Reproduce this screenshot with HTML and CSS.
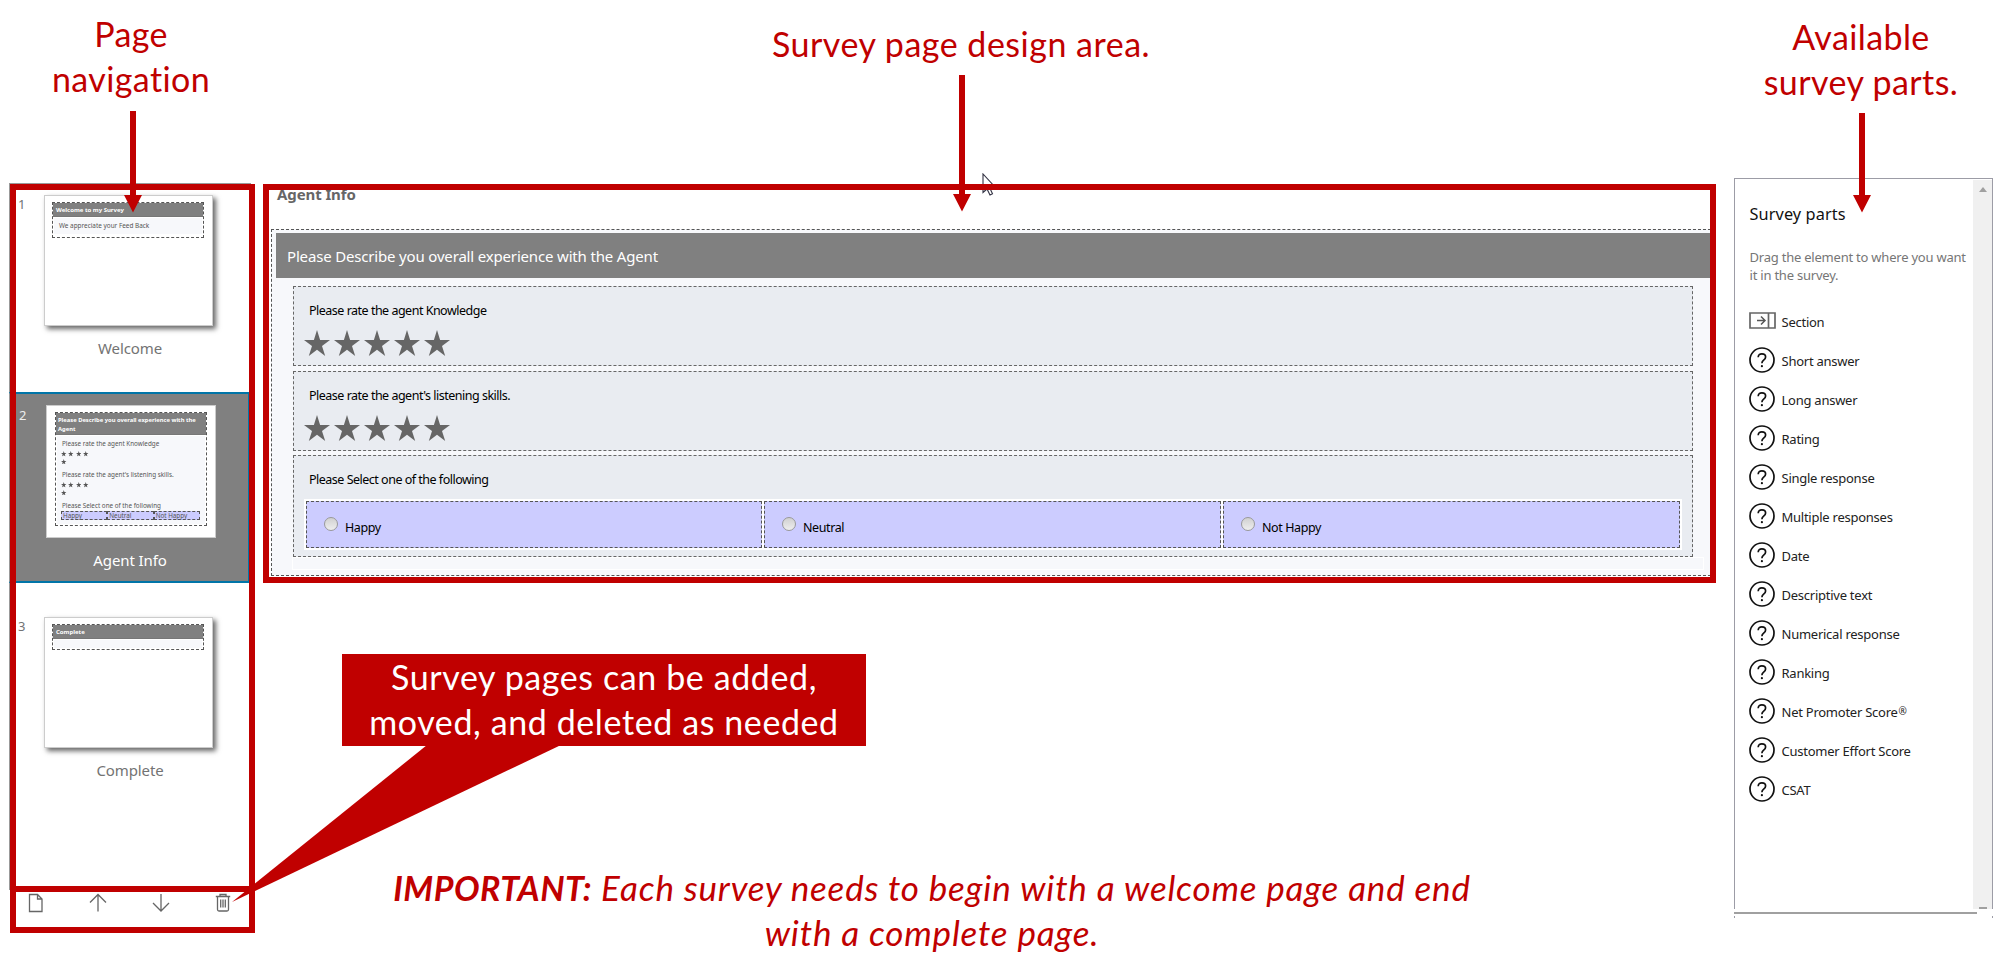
FILE: index.html
```html
<!DOCTYPE html>
<html lang="en">
<head>
<meta charset="utf-8">
<title>Survey designer overview</title>
<link rel="stylesheet" href="styles.css">
</head>
<body>
<svg class="defs" width="0" height="0">
  <symbol id="star" viewBox="0 0 26 26"><path d="M13 0l3.100 10H26l-8 5.900L21.200 26 13 19.700 4.800 26 8 15.900 0 10h9.900z" fill="currentColor"/></symbol>
  <symbol id="ask" viewBox="0 0 26 26"><circle cx="13" cy="13" r="12" fill="none" stroke="#111" stroke-width="1.700"/><path d="M9.200 10.200C9.200 7.900 10.800 6.800 12.900 6.800c2.200 0 3.700 1.200 3.700 3.100 0 1.600-.9 2.300-2 3.200-1.100.9-1.700 1.500-1.700 3.100" fill="none" stroke="#111" stroke-width="1.700"/><circle cx="12.900" cy="19.200" r="1.100" fill="#111"/></symbol>
</svg>

<main class="app">
  <aside class="sidebar">
    <section class="page page-welcome">
      <span class="num">1</span>
      <div class="card">
        <div class="mini">
          <div class="mini-head">Welcome to my Survey</div>
          <div class="mini-body mini-text">We appreciate your Feed Back</div>
        </div>
      </div>
      <div class="label">Welcome</div>
    </section>
    <section class="page page-agent">
      <span class="num">2</span>
      <div class="card">
        <div class="mini">
          <div class="mini-head">Please Describe you overall experience with the Agent</div>
          <div class="mini-body">
            <div class="mini-q">Please rate the agent Knowledge</div>
            <div class="mini-stars"><svg><use href="#star"/></svg><svg><use href="#star"/></svg><svg><use href="#star"/></svg><svg><use href="#star"/></svg><svg><use href="#star"/></svg></div>
            <div class="mini-q">Please rate the agent's listening skills.</div>
            <div class="mini-stars"><svg><use href="#star"/></svg><svg><use href="#star"/></svg><svg><use href="#star"/></svg><svg><use href="#star"/></svg><svg><use href="#star"/></svg></div>
            <div class="mini-q">Please Select one of the following</div>
            <div class="mini-opts"><span>Happy</span><span>Neutral</span><span>Not Happy</span></div>
          </div>
        </div>
      </div>
      <div class="label">Agent Info</div>
    </section>
    <section class="page page-complete">
      <span class="num">3</span>
      <div class="card">
        <div class="mini">
          <div class="mini-head">Complete</div>
          <div class="mini-body"></div>
        </div>
      </div>
      <div class="label">Complete</div>
    </section>
    <nav class="tools">
      <svg width="16" height="20" viewBox="0 0 16 20"><path d="M1.500 1.500h8l4.500 4.500v12.500H1.500zM9.500 1.500V6H14"/></svg>
      <svg width="18" height="20" viewBox="0 0 18 20"><path d="M9 18.500V1.500M1 9.500l8-8 8 8"/></svg>
      <svg width="18" height="20" viewBox="0 0 18 20"><path d="M9 1v17M1 10l8 8 8-8"/></svg>
      <svg width="16" height="20" viewBox="0 0 16 20"><path d="M.8 3.500h14.400M5 3.500v-2h6v2M2.500 3.500v13q0 1.500 1.500 1.500h8q1.500 0 1.500-1.500v-13M5.700 6.500v8M8 6.500v8M10.300 6.500v8"/></svg>
    </nav>
  </aside>

  <div class="design">
    <h1 class="design-title">Agent Info</h1>
    <svg class="cursor" width="14" height="24" viewBox="0 0 14 24"><path d="M1 1v18.500l4-3.500 3 6 2.500-1.200L7.800 15 12.500 13.500z" fill="#fff" stroke="#333344" stroke-width="1.100"/></svg>
    <section class="section">
      <h2 class="section-head">Please Describe you overall experience with the Agent</h2>
      <div class="questions">
        <div class="question">
          <p>Please rate the agent Knowledge</p>
          <div class="stars"><svg><use href="#star"/></svg><svg><use href="#star"/></svg><svg><use href="#star"/></svg><svg><use href="#star"/></svg><svg><use href="#star"/></svg></div>
        </div>
        <div class="question">
          <p>Please rate the agent's listening skills.</p>
          <div class="stars"><svg><use href="#star"/></svg><svg><use href="#star"/></svg><svg><use href="#star"/></svg><svg><use href="#star"/></svg><svg><use href="#star"/></svg></div>
        </div>
        <div class="question question-choice">
          <p>Please Select one of the following</p>
          <div class="options">
            <div class="option"><i class="radio"></i><span>Happy</span></div>
            <div class="option"><i class="radio"></i><span>Neutral</span></div>
            <div class="option"><i class="radio"></i><span>Not Happy</span></div>
          </div>
        </div>
      </div>
      <div class="drop"></div>
    </section>
  </div>

  <aside class="parts">
    <div class="parts-main">
      <h2>Survey parts</h2>
      <p>Drag the element to where you want<br>it in the survey.</p>
      <ul>
        <li><svg class="sec" viewBox="0 0 27 17"><path d="M1 1h25v15H1zM19.500 1v15" fill="none" stroke="#666" stroke-width="1.700"/><path d="M8 8.500h8M12 4.500l4 4-4 4" fill="none" stroke="#555" stroke-width="1.500"/></svg><span>Section</span></li>
        <li><svg><use href="#ask"/></svg><span>Short answer</span></li>
        <li><svg><use href="#ask"/></svg><span>Long answer</span></li>
        <li><svg><use href="#ask"/></svg><span>Rating</span></li>
        <li><svg><use href="#ask"/></svg><span>Single response</span></li>
        <li><svg><use href="#ask"/></svg><span>Multiple responses</span></li>
        <li><svg><use href="#ask"/></svg><span>Date</span></li>
        <li><svg><use href="#ask"/></svg><span>Descriptive text</span></li>
        <li><svg><use href="#ask"/></svg><span>Numerical response</span></li>
        <li><svg><use href="#ask"/></svg><span>Ranking</span></li>
        <li><svg><use href="#ask"/></svg><span>Net Promoter Score<b class="reg">®</b></span></li>
        <li><svg><use href="#ask"/></svg><span>Customer Effort Score</span></li>
        <li><svg><use href="#ask"/></svg><span>CSAT</span></li>
      </ul>
    </div>
    <div class="scrollbar"><i class="up"></i><i class="down"></i></div>
    <div class="parts-edge"></div>
  </aside>
</main>

<!-- Annotations laid over the designer -->
<div class="frame frame-pages"></div>
<div class="frame frame-tools"></div>
<div class="frame frame-design"></div>
<svg class="shapes" width="2000" height="979" viewBox="0 0 2000 979" fill="#c00000">
  <path d="M130 111h6v84h6l-9 17.500-9-17.500h6z"/>
  <path d="M959 75h6v119h6l-9 17.500-9-17.500h6z"/>
  <path d="M1859 113h6v82h6l-9 17.500-9-17.500h6z"/>
  <path d="M427 745h134L232 902z"/>
</svg>
<div class="note note-nav">Page<br>navigation</div>
<div class="note note-design">Survey page design area.</div>
<div class="note note-parts">Available<br>survey parts.</div>
<div class="note note-callout">Survey pages can be added,<br>moved, and deleted as needed</div>
<div class="note note-important"><b>IMPORTANT:</b> Each survey needs to begin with a welcome page and end<br>with a complete page.</div>
</body>
</html>
```
FILE: styles.css
```css
* { box-sizing: border-box; }
body { margin: 0; width: 2000px; height: 979px; position: relative; overflow: hidden; background: #fff; font-family: "Noto Sans", "Open Sans", sans-serif; }
h1, h2, p, ul { margin: 0; padding: 0; font-weight: 400; }
svg { display: block; flex: none; }
.defs { position: absolute; }
.app { display: flex; align-items: flex-start; padding-top: 178px; }

/* page navigation */
.sidebar { margin: 5px 0 0 9px; width: 242px; }
.page { display: grid; grid-template-columns: 34px 169px; align-content: start; border-left: 1px solid #999; color: #737373; }
.page-welcome { border-top: 1px solid #999; height: 209px; padding-top: 11px; }
.page-agent { height: 191px; padding: 11px 0 0 2px; background: #808080; border-top: 2px solid #0075a8; border-bottom: 2px solid #0075a8; border-right: 2px solid #0075a8; margin-right: 1px; color: #fff; }
.page-complete { height: 307px; padding-top: 34px; }
.num { font-size: 13px; line-height: 20px; padding-left: 8px; margin-top: -1px; }
.label { grid-column: 2; text-align: center; font-size: 15px; letter-spacing: -.1px; line-height: 24px; margin-top: 9.500px; padding-left: 3px; }
.page-agent .label { padding: 0; margin-left: -1px; }
.card { height: 131px; border: 1px solid #ccc; background: #fff; padding: 6px 8px 0 7px; box-shadow: 3px 3px 5px rgba(0,0,0,.6); }
.page-agent .card { width: 170px; height: 133px; box-shadow: none; padding-left: 8px; }
.page-agent .num { color: #eee; margin-top: 0; padding-left: 7px; }
.mini { border: 1px dashed #555; color: #555; font-size: 6.300px; height: 36px; }
.mini-head { background: #808080; color: #fff; font-weight: 700; font-size: 6px; height: 14px; line-height: 15px; padding-left: 3px; border-bottom: 1px solid #777; white-space: nowrap; }
.mini-body { background: #f7f8fb; height: 16px; margin: 1px 1px 0; }
.mini-text { line-height: 15px; padding-left: 5px; font-size: 6.400px; }
.page-complete .mini { height: 26px; }
.page-complete .mini-body { height: 8px; }
.page-agent .mini { height: 114px; }
.page-agent .mini-head { height: 22px; line-height: 9px; padding: 3px 0 0 2px; font-size: 5.800px; white-space: normal; }
.page-agent .mini-body { height: 88px; padding: 3px 5px 0 4px; }
.mini-q { line-height: 9px; height: 9px; padding-left: 1px; white-space: nowrap; }
.mini-stars { display: flex; flex-wrap: wrap; width: 30px; gap: 2.200px 1.900px; height: 17px; margin: 3px 0 2px; align-content: flex-start; color: #555; }
.mini-stars svg { width: 5.500px; height: 5.500px; }
.mini-opts { display: grid; grid-template-columns: repeat(3, 1fr); margin-top: 1px; height: 9px; background: #ccf; }
.mini-opts span { border: 1px dashed #555; line-height: 7px; padding-left: 1px; white-space: nowrap; }
.tools { height: 36px; display: flex; justify-content: space-between; padding: 3px 20px 0 19px; }
.tools svg { fill: none; stroke: #666; stroke-width: 1.300; }

/* design area */
.design { position: relative; margin: 6px 0 0 18px; width: 1442px; height: 396px; }
.design-title { color: #666; font-size: 15px; font-weight: 700; line-height: 20px; letter-spacing: -.1px; padding-left: 8px; }
.cursor { position: absolute; left: 713px; top: -11px; }
.section { margin: 25px 0 0 2px; height: 347px; border: 1px dashed #555; border-right: 0; background: #f7f8fb; padding: 3px 0 0 4px; }
.section-head { height: 45px; line-height: 46px; padding-left: 11px; background: #808080; color: #fff; font-size: 15px; letter-spacing: -.17px; }
.questions { margin: 8px 0 0 17px; width: 1399px; display: grid; grid-template-rows: 80px 80px 102px; row-gap: 4.700px; }
.question { background: #e9ecf1; border: 1px dashed #666; padding: 14px 10px 0; font-size: 12.500px; letter-spacing: -.5px; color: #000; }
.question p { line-height: 20px; padding-left: 5px; }
.stars { display: flex; gap: 4.100px; margin-top: 9px; color: #666; }
.stars svg { width: 26px; height: 26px; }
.options { background: #fff; display: grid; grid-template-columns: 456px 457px 457px; gap: 2px; padding: 2px; width: 1378px; height: 51px; margin-top: 9px; }
.option { background: #ccf; border: 1px dashed #555; display: flex; align-items: center; gap: 8px; padding-left: 17px; letter-spacing: -.4px; }
.option span { padding-top: 5px; }
.radio { width: 14px; height: 14px; border-radius: 50%; border: 1px solid #999; background: linear-gradient(#d0d0d0, #eee); margin: -2px -1px 0 0; }
.drop { margin-left: 16px; width: 1412px; height: 13px; border: 1px solid #fff; }

/* survey parts */
.parts { position: relative; margin-left: 23px; width: 259px; height: 740px; border: 1px solid #9c9ca6; border-bottom: 0; display: flex; justify-content: space-between; }
.parts-main { padding: 22.500px 0 0 14.500px; }
.parts h2 { font-size: 16.300px; line-height: 24px; color: #111; letter-spacing: .1px; }
.parts p { margin-top: 22px; font-size: 13px; line-height: 18px; letter-spacing: -.22px; color: #767676; white-space: nowrap; }
.parts ul { list-style: none; margin-top: 19px; }
.parts li { height: 39px; display: flex; align-items: center; font-size: 13px; line-height: 39px; letter-spacing: -.25px; color: #222; white-space: nowrap; }
.parts li svg { width: 26px; height: 26px; margin: -3px 7px 0 -1px; }
.parts li .sec { width: 27px; height: 17px; margin: -3px 6px 0 -1px; }
.reg { font-size: 10px; font-weight: 400; vertical-align: 2px; line-height: 1; margin-left: 1px; }
.scrollbar { width: 19px; height: 729px; margin-top: 1px; background: #f0f0f0; display: flex; flex-direction: column; justify-content: space-between; align-items: center; padding-top: 7px; }
.up { border: 4px solid transparent; border-top: 0; border-bottom: 5px solid #a0a0a0; }
.down { width: 8px; height: 2px; background: #a0a0a0; }
.parts-edge { position: absolute; left: -1px; top: 730px; width: 260px; height: 7px; background: linear-gradient(#a0a0a0, #a0a0a0) 0 3px / 243px 2px no-repeat #fff; }

/* annotations */
.frame { position: absolute; border: 6px solid #c00000; }
.frame-pages { left: 10px; top: 184px; width: 245px; height: 708px; }
.frame-tools { left: 10px; top: 886px; width: 245px; height: 47px; }
.frame-design { left: 263px; top: 184px; width: 1453px; height: 399px; }
.shapes { position: absolute; left: 0; top: 0; }
.note { position: absolute; font: 400 34px/45px Lato, sans-serif; letter-spacing: .4px; color: #c00000; text-align: center; white-space: nowrap; }
.note-nav { left: 31px; top: 11px; width: 200px; }
.note-design { left: 711px; top: 21px; width: 500px; letter-spacing: .5px; }
.note-parts { left: 1731px; top: 13.500px; width: 260px; }
.note-callout { left: 342px; top: 654px; width: 524px; height: 92px; background: #c00000; color: #fff; letter-spacing: .6px; }
.note-important { left: 332px; top: 865px; width: 1200px; font-style: italic; font-size: 35px; letter-spacing: .8px; }
.note-important b { font-size: 34px; letter-spacing: .5px; }
```
